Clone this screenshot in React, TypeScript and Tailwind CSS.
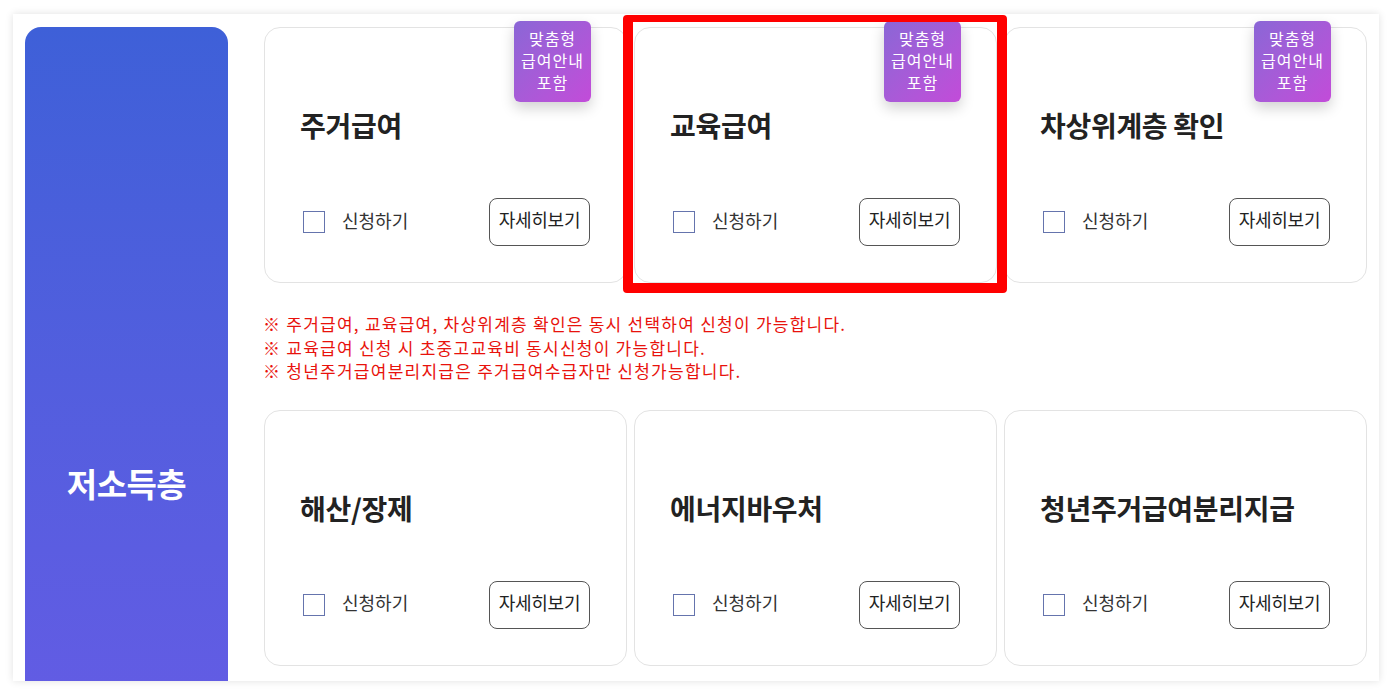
import React from "react";

type Benefit = {
  title: string;
  badge: boolean;
};

const row1: Benefit[] = [
  { title: "주거급여", badge: true },
  { title: "교육급여", badge: true },
  { title: "차상위계층 확인", badge: true },
];

const row2: Benefit[] = [
  { title: "해산/장제", badge: false },
  { title: "에너지바우처", badge: false },
  { title: "청년주거급여분리지급", badge: false },
];

const notes = [
  "※ 주거급여, 교육급여, 차상위계층 확인은 동시 선택하여 신청이 가능합니다.",
  "※ 교육급여 신청 시 초중고교육비 동시신청이 가능합니다.",
  "※ 청년주거급여분리지급은 주거급여수급자만 신청가능합니다.",
];

const Card = ({ item }: { item: Benefit }) => {
  return (
    <div className="relative bg-white border border-[#e3e3e3] rounded-[16px] h-[256px] pl-[35px] pr-[36px] pt-[78px]">
      {item.badge && (
        <div className="absolute top-[-7px] right-[35px] w-[77px] h-[81px] rounded-[6px] bg-linear-to-br from-[#8a66d6] to-[#c24bd9] text-white text-[16px] leading-[22px] tracking-[1px] text-center pt-[6px] shadow-[0_6px_14px_rgba(0,0,0,0.18)]">
          <p>맞춤형</p>
          <p>급여안내</p>
          <p>포함</p>
        </div>
      )}
      <h2 className="text-[28px] leading-[38px] font-bold text-[#222] tracking-[-0.3px]">
        {item.title}
      </h2>
      <div className="flex items-center justify-between mt-[54px]">
        <label className="flex items-center gap-[17px] pl-[3px]">
          <span className="w-[22px] h-[22px] border-[1.5px] border-[#6574ad] bg-white" />
          <span className="text-[18px] leading-[24px] text-[#333] pb-[5px]">신청하기</span>
        </label>
        <button className="h-[48px] w-[101px] border border-[#555] rounded-[8px] bg-white text-[18px] leading-[24px] text-[#222] tracking-[-0.3px] pb-[6px]">
          자세히보기
        </button>
      </div>
    </div>
  );
};

const App = () => {
  return (
    <div
      className="w-[1394px] h-[696px] bg-white pt-[14px] pl-[13px]"
      style={{ fontFamily: '"Noto Sans CJK KR", "Noto Sans", sans-serif' }}
    >
      <div className="relative w-[1366px] h-[667px] bg-white overflow-hidden shadow-[0_0_8px_rgba(0,0,0,0.12)] flex pl-[12px] pt-[13px] pr-[12px]">
        <div className="w-[203px] h-[914px] shrink-0 rounded-t-[16px] bg-linear-to-b from-[#3e60d8] to-[#6d5ae8] flex items-center justify-center">
          <span className="text-white text-[33px] font-bold tracking-[-0.5px]">저소득층</span>
        </div>

        <div className="ml-[36px] flex-1">
          <div className="grid grid-cols-3 gap-[7px]">
            {row1.map((it) => (
              <Card key={it.title} item={it} />
            ))}
          </div>

          <div className="mt-[29px] ml-[-1px] text-[17px] leading-[23.5px] tracking-[1.25px] text-[#e8120c]">
            {notes.map((n) => (
              <p key={n}>{n}</p>
            ))}
          </div>

          <div className="grid grid-cols-3 gap-[7px] mt-[27px]">
            {row2.map((it) => (
              <Card key={it.title} item={it} />
            ))}
          </div>
        </div>

        <div className="absolute left-[610px] top-[1px] w-[384px] h-[278px] border-[10px] border-t-[7px] border-[#ff0000] rounded-[4px] pointer-events-none" />
      </div>
    </div>
  );
};

export default App;
